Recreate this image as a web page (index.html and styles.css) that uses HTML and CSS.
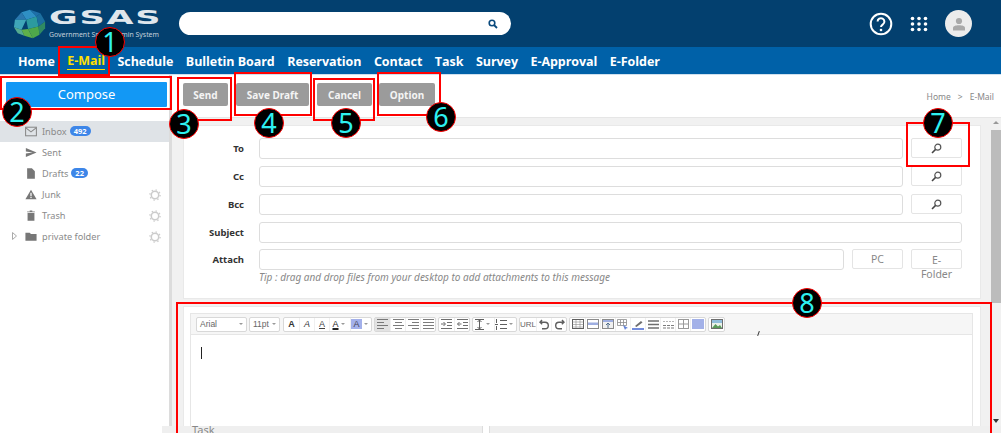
FILE: index.html
```html
<!DOCTYPE html>
<html lang="en">
<head>
  <meta charset="UTF-8">
  <title>GSAS E-Mail</title>
  <link rel="stylesheet" href="styles.css">
</head>
<body>

<div class="page">
  <header class="topbar">
    <div class="logo">
      <svg width="34" height="30" viewBox="0 0 36 36" preserveAspectRatio="none">
        <polygon points="18,1 9,4 14,13 25,9" fill="#2f8fc4"/>
        <polygon points="18,1 29,5 25,9" fill="#1f6fa8"/>
        <polygon points="9,4 2,13 14,13" fill="#2a78b0"/>
        <polygon points="2,13 1,22 9,25 14,13" fill="#3fa6b8"/>
        <polygon points="14,13 25,9 27,21 16,24" fill="#2c9a9f"/>
        <polygon points="25,9 29,5 34,15 27,21" fill="#1c6f9f"/>
        <polygon points="1,22 9,25 12,32 5,29" fill="#55ab8f"/>
        <polygon points="9,25 16,24 21,35 12,32" fill="#5fb04a"/>
        <polygon points="16,24 27,21 28,31 21,35" fill="#4ea84a"/>
        <polygon points="27,21 34,15 34,23 28,31" fill="#2f8a62"/>
      </svg>
      <div class="logo-text">
        <span class="logo-name">GSAS</span>
        <span class="logo-sub">Government Smart Admin System</span>
      </div>
    </div>
    <div class="search">
      <svg width="10" height="10" viewBox="0 0 10 10"><circle cx="4" cy="4" r="2.8" fill="none" stroke="#0a4a7d" stroke-width="1.6"/><line x1="6" y1="6" x2="9" y2="9" stroke="#0a4a7d" stroke-width="1.8"/></svg>
    </div>
    <div class="top-icons">
      <svg width="24" height="24" viewBox="0 0 24 24">
        <circle cx="12" cy="12" r="10.3" fill="none" stroke="#fff" stroke-width="2"/>
        <path d="M8.6 9.6a3.4 3.4 0 1 1 5.3 2.8c-1.2.8-1.9 1.3-1.9 2.7" fill="none" stroke="#fff" stroke-width="2"/>
        <circle cx="12" cy="18" r="1.3" fill="#fff"/>
      </svg>
      <svg class="grid-icon" width="18" height="16" viewBox="0 0 18 16" fill="#fff">
        <circle cx="2.5" cy="2.5" r="1.8"/><circle cx="9" cy="2.5" r="1.8"/><circle cx="15.5" cy="2.5" r="1.8"/>
        <circle cx="2.5" cy="8" r="1.8"/><circle cx="9" cy="8" r="1.8"/><circle cx="15.5" cy="8" r="1.8"/>
        <circle cx="2.5" cy="13.5" r="1.8"/><circle cx="9" cy="13.5" r="1.8"/><circle cx="15.5" cy="13.5" r="1.8"/>
      </svg>
      <div class="avatar">
        <svg width="14" height="14" viewBox="0 0 14 14" fill="#a9a9a9"><circle cx="7" cy="4" r="3.1"/><path d="M1 13.5V11c0-2 2.500-2.800 6-2.800s6 .8 6 2.800v2.500z"/></svg>
      </div>
    </div>
  </header>

  <nav class="mainnav">
    <a>Home</a>
    <a class="active">E-Mail</a>
    <a>Schedule</a>
    <a>Bulletin Board</a>
    <a>Reservation</a>
    <a>Contact</a>
    <a>Task</a>
    <a>Survey</a>
    <a>E-Approval</a>
    <a>E-Folder</a>
  </nav>

  <div class="workspace">
    <aside class="sidebar">
      <button class="compose">Compose</button>
      <ul class="folders">
        <li class="selected">
          <svg class="ficon" viewBox="0 0 14 12"><rect x=".7" y="1" width="12.600" height="10" fill="none" stroke="#888" stroke-width="1.200"/><path d="M1 1.800l6 4.700 6-4.700" fill="none" stroke="#888" stroke-width="1.200"/></svg>
          <span>Inbox</span><span class="count">492</span>
        </li>
        <li>
          <svg class="ficon" viewBox="0 0 14 12"><path d="M1 .8L13.500 6 1 11.200V7.300L9 6 1 4.700z" fill="#777"/></svg>
          <span>Sent</span>
        </li>
        <li>
          <svg class="ficon" viewBox="0 0 14 12"><path d="M2.500 0H8l3.500 3.500V12h-9z" fill="#777"/></svg>
          <span>Drafts</span><span class="count">22</span>
        </li>
        <li>
          <svg class="ficon" viewBox="0 0 14 12"><path d="M7 .5L13.500 11.500H.5z" fill="#777"/><rect x="6.300" y="4" width="1.400" height="4" fill="#fff"/><rect x="6.300" y="8.800" width="1.400" height="1.400" fill="#fff"/></svg>
          <span>Junk</span>
          <svg class="gear" width="12" height="12" viewBox="0 0 12 12"><circle cx="6" cy="6" r="3.700" fill="none" stroke="#ccc" stroke-width="1.500"/><circle cx="6" cy="6" r="5.100" fill="none" stroke="#ccc" stroke-width="1.300" stroke-dasharray="1.400 2.600"/></svg>
        </li>
        <li>
          <svg class="ficon" viewBox="0 0 14 12"><path d="M3 3h8v9H3zM2.500 1.200h3V.2h3v1h3v1h-9z" fill="#777"/></svg>
          <span>Trash</span>
          <svg class="gear" width="12" height="12" viewBox="0 0 12 12"><circle cx="6" cy="6" r="3.700" fill="none" stroke="#ccc" stroke-width="1.500"/><circle cx="6" cy="6" r="5.100" fill="none" stroke="#ccc" stroke-width="1.300" stroke-dasharray="1.400 2.600"/></svg>
        </li>
        <li>
          <svg class="caret" width="5" height="8" viewBox="0 0 5 8"><path d="M.5.500L4.500 4 .5 7.500z" fill="none" stroke="#aaa"/></svg>
          <svg class="ficon" viewBox="0 0 14 12"><path d="M.5 1.500h5l1.500 1.500h6.500v8H.5z" fill="#777"/></svg>
          <span>private folder</span>
          <svg class="gear" width="12" height="12" viewBox="0 0 12 12"><circle cx="6" cy="6" r="3.700" fill="none" stroke="#ccc" stroke-width="1.500"/><circle cx="6" cy="6" r="5.100" fill="none" stroke="#ccc" stroke-width="1.300" stroke-dasharray="1.400 2.600"/></svg>
        </li>
      </ul>
    </aside>

    <main class="content">
      <div class="actions">
        <button class="act act-send">Send</button>
        <button class="act act-save">Save Draft</button>
        <button class="act act-cancel">Cancel</button>
        <button class="act act-option">Option</button>
        <div class="crumbs"><span>Home</span><span class="sep">&gt;</span><span>E-Mail</span></div>
      </div>

      <div class="scrollarea">
        <div class="panels">
          <section class="panel form-panel">
            <div class="row"><label>To</label><div class="field"></div><button class="find"><svg width="11" height="11" viewBox="0 0 11 11"><circle cx="6.800" cy="4.200" r="3" fill="none" stroke="#555" stroke-width="1.200"/><line x1="4.600" y1="6.400" x2="1" y2="10" stroke="#444" stroke-width="1.500"/></svg></button></div>
            <div class="row"><label>Cc</label><div class="field"></div><button class="find"><svg width="11" height="11" viewBox="0 0 11 11"><circle cx="6.800" cy="4.200" r="3" fill="none" stroke="#555" stroke-width="1.200"/><line x1="4.600" y1="6.400" x2="1" y2="10" stroke="#444" stroke-width="1.500"/></svg></button></div>
            <div class="row"><label>Bcc</label><div class="field"></div><button class="find"><svg width="11" height="11" viewBox="0 0 11 11"><circle cx="6.800" cy="4.200" r="3" fill="none" stroke="#555" stroke-width="1.200"/><line x1="4.600" y1="6.400" x2="1" y2="10" stroke="#444" stroke-width="1.500"/></svg></button></div>
            <div class="row row-subject"><label>Subject</label><div class="field"></div></div>
            <div class="row attach-row"><label>Attach</label><div class="field"></div><button class="find btn-pc">PC</button><button class="find btn-folder">E-<br>Folder</button></div>
            <p class="tip">Tip : drag and drop files from your desktop to add attachments to this message</p>
          </section>

          <section class="panel editor-panel">
            <div class="editor">
              <div class="edit-tools">
                <div class="tgroup tsel sel-font"><span>Arial</span><i class="drop"></i></div>
                <div class="tgroup tsel sel-size"><span>11pt</span><i class="drop"></i></div>
                <div class="tgroup">
                  <b class="tb">A</b><b class="tb slant">A</b><u class="tb uline">A</u>
                  <span class="tb tb-wide"><u class="uline blackline">A</u><i class="drop"></i></span>
                  <span class="tb tb-wide"><em class="hilite">A</em><i class="drop"></i></span>
                </div>
                <div class="tgroup">
                  <span class="tb on"><svg width="11" height="10" viewBox="0 0 11 10"><path d="M0 .5h11M0 3.500h7M0 6.500h11M0 9.500h7" stroke="#666"/></svg></span>
                  <span class="tb"><svg width="11" height="10" viewBox="0 0 11 10"><path d="M0 .5h11M2 3.500h7M0 6.500h11M2 9.500h7" stroke="#666"/></svg></span>
                  <span class="tb"><svg width="11" height="10" viewBox="0 0 11 10"><path d="M0 .5h11M4 3.500h7M0 6.500h11M4 9.500h7" stroke="#666"/></svg></span>
                  <span class="tb"><svg width="11" height="10" viewBox="0 0 11 10"><path d="M0 .5h11M0 3.500h11M0 6.500h11M0 9.500h11" stroke="#666"/></svg></span>
                </div>
                <div class="tgroup">
                  <span class="tb"><svg width="11" height="10" viewBox="0 0 11 10"><path d="M0 .5h11M6 3.500h5M6 6.500h5M0 9.500h11M0 5h4M2.500 3l2 2-2 2" stroke="#555" fill="none"/></svg></span>
                  <span class="tb"><svg width="11" height="10" viewBox="0 0 11 10"><path d="M0 .5h11M6 3.500h5M6 6.500h5M0 9.500h11M4.500 5h-4M2.500 3l-2 2 2 2" stroke="#555" fill="none"/></svg></span>
                </div>
                <div class="tgroup">
                  <span class="tb tb-wide"><svg width="9" height="11" viewBox="0 0 9 11"><path d="M0 .5h9M0 10.500h9M4.500 1v9M2.500 3l2-2 2 2M2.500 8l2 2 2-2" stroke="#444" fill="none"/></svg><i class="drop"></i></span>
                  <span class="tb tb-wide"><svg width="12" height="11" viewBox="0 0 12 11"><path d="M5 1.500h7M5 5.500h7M5 9.500h7" stroke="#444"/><path d="M1.500 0v4M1.500 7v4" stroke="#444"/><path d="M0 5.500h3" stroke="#444"/></svg><i class="drop"></i></span>
                </div>
                <div class="tgroup">
                  <span class="tb tb-url">URL</span>
                  <span class="tb"><svg width="11" height="11" viewBox="0 0 11 11"><path d="M3 1L1 3.200l2.200 2M1.500 3.200h4.500a3.300 3.300 0 0 1 0 6.600H3" fill="none" stroke="#444" stroke-width="1.400"/></svg></span>
                  <span class="tb"><svg width="11" height="11" viewBox="0 0 11 11"><path d="M8 1l2 2.200-2.200 2M9.500 3.200H5a3.300 3.300 0 0 0 0 6.600h3" fill="none" stroke="#444" stroke-width="1.400"/></svg></span>
                </div>
                <div class="tgroup">
                  <span class="tb"><svg width="12" height="10" viewBox="0 0 12 10"><rect x=".5" y=".5" width="11" height="9" fill="#fff" stroke="#444"/><path d="M.5 3h11M.5 5.500h11M.5 8h11M4 1v8M8 1v8" stroke="#777" stroke-width=".6"/></svg></span>
                  <span class="tb"><svg width="12" height="10" viewBox="0 0 12 10"><rect x=".5" y=".5" width="11" height="9" fill="#fff" stroke="#777"/><rect x="1" y="3.500" width="10" height="2.500" fill="#8ea0dc"/></svg></span>
                  <span class="tb"><svg width="12" height="10" viewBox="0 0 12 10"><rect x=".5" y=".5" width="11" height="9" fill="#eee" stroke="#777"/><rect x="1" y="1" width="10" height="2" fill="#8ea0dc"/><path d="M6 9V4M4 6l2-2 2 2" stroke="#357" fill="none"/></svg></span>
                  <span class="tb"><svg width="12" height="11" viewBox="0 0 12 11"><path d="M.5 .5h9v6h-9zM.5 3.500h9M3.500 1v5M6.500 1v5" fill="none" stroke="#777" stroke-width=".8"/><path d="M6 6l5 3-2 .5-1 1.500z" fill="#4a6fd0"/></svg></span>
                  <span class="tb"><svg width="12" height="11" viewBox="0 0 12 11"><path d="M3 7l6-5 1.500 1.500-6 4.500z" fill="#555"/><rect x="0" y="9" width="12" height="2" fill="#5b78d8"/></svg></span>
                  <span class="tb"><svg width="11" height="9" viewBox="0 0 11 9"><path d="M0 1h11M0 4.500h11M0 8h11" stroke="#555" stroke-width="1.300"/></svg></span>
                  <span class="tb"><svg width="11" height="9" viewBox="0 0 11 9"><path d="M0 1.500h11" stroke="#aaa" stroke-dasharray="2 1"/><path d="M0 5.500h11M0 8h11" stroke="#666" stroke-dasharray="3 1"/></svg></span>
                  <span class="tb"><svg width="11" height="10" viewBox="0 0 11 10"><rect x=".5" y=".5" width="10" height="9" fill="none" stroke="#888"/><path d="M5.500 1v8M1 5h9" stroke="#888"/></svg></span>
                  <span class="tb"><svg width="12" height="10" viewBox="0 0 12 10"><rect width="12" height="10" fill="#94a4e4"/></svg></span>
                </div>
                <div class="tgroup">
                  <span class="tb"><svg width="12" height="10" viewBox="0 0 12 10"><rect x=".5" y=".5" width="11" height="9" fill="#e8f0e8" stroke="#555"/><path d="M1 9l3.500-4 2.500 2.500L9 6l2 3z" fill="#3d8a3d"/><rect x="1" y="1" width="10" height="3" fill="#7fb5d8"/></svg></span>
                </div>
              </div>
              <div class="edit-body"><span class="cursor"></span></div>
            </div>
          </section>
        </div>
        <div class="vscroll">
          <i class="arrow up"></i>
          <div class="thumb"></div>
          <i class="arrow down"></i>
        </div>
      </div>
      <div class="under"><span class="under-left">Task</span><span class="under-gap"></span></div>
    </main>
  </div>

  <!-- guide marks drawn on top of the screenshot -->
  <div class="mark box-1"></div>
  <div class="mark box-2"></div>
  <div class="mark box-3"></div>
  <div class="mark box-4"></div>
  <div class="mark box-5"></div>
  <div class="mark box-6"></div>
  <div class="mark box-7"></div>
  <div class="mark box-8"></div>
  <div class="tick"></div>
  <div class="num num-1">1</div>
  <div class="num num-2">2</div>
  <div class="num num-3">3</div>
  <div class="num num-4">4</div>
  <div class="num num-5">5</div>
  <div class="num num-6">6</div>
  <div class="num num-7">7</div>
  <div class="num num-8">8</div>
</div>

</body>
</html>
```
FILE: styles.css
```css
html, body {
  margin: 0;
  padding: 0;
  background: #fff;
}

.page {
  position: relative;
  width: 1001px;
  height: 433px;
  overflow: hidden;
  font-family: "Noto Sans", "Open Sans", sans-serif;
  display: flex;
  flex-direction: column;
}

button {
  font-family: inherit;
  cursor: pointer;
}

/* top bar */
.topbar {
  height: 47px;
  background: #03406f;
  display: flex;
  align-items: center;
  flex: none;
}

.logo {
  display: flex;
  align-items: center;
  width: 179px;
  padding-left: 13px;
  box-sizing: border-box;
  gap: 2px;
}

.logo-text {
  display: flex;
  flex-direction: column;
  color: #dfe6ec;
}

.logo-name {
  font-family: "DejaVu Sans", sans-serif;
  font-size: 20px;
  font-weight: bold;
  line-height: 18px;
  letter-spacing: 1px;
  transform: scaleX(1.75);
  transform-origin: left;
}

.logo-sub {
  margin-top: 4px;
  font-size: 6.900px;
  line-height: 9px;
  color: #c3d0db;
  white-space: nowrap;
}

.search {
  width: 332px;
  height: 23px;
  border-radius: 12px;
  background: #fff;
  display: flex;
  align-items: center;
  justify-content: flex-end;
  padding-right: 13px;
  box-sizing: border-box;
}

.top-icons {
  margin-left: auto;
  display: flex;
  align-items: center;
  padding-right: 29px;
}

.grid-icon {
  margin-left: 17px;
}

.avatar {
  margin-left: 17px;
  width: 27px;
  height: 27px;
  border-radius: 50%;
  background: #ececec;
  display: flex;
  align-items: center;
  justify-content: center;
}

/* nav */
.mainnav {
  height: 28px;
  background: #0061a8;
  display: flex;
  align-items: center;
  flex: none;
  padding: 1px 0 0 18px;
  gap: 12.500px;
  border-bottom: 1px solid #cfe0ee;
  box-sizing: border-box;
}

.mainnav a {
  color: #fff;
  font-size: 12.500px;
  font-weight: bold;
  font-family: "Open Sans", sans-serif;
  white-space: nowrap;
  letter-spacing: -.05px;
}

.mainnav a.active {
  color: #ffe000;
  border-bottom: 1px solid #ffe000;
}

/* layout */
.workspace {
  flex: 1;
  display: flex;
  min-height: 0;
}

.sidebar {
  width: 169px;
  flex: none;
  padding-top: 7px;
  box-sizing: border-box;
}

.compose {
  display: block;
  margin-left: 6px;
  width: 161px;
  height: 25px;
  border: none;
  border-radius: 1px;
  background: #1298f5;
  color: #fff;
  font-size: 13px;
  padding: 0 0 2px;
}

.folders {
  list-style: none;
  margin: 14px 0 0;
  padding: 0;
}

.folders li {
  position: relative;
  height: 21px;
  display: flex;
  align-items: center;
  padding: 0 0 1px 25px;
  box-sizing: border-box;
  font-size: 9.200px;
  color: #8a8a8a;
  white-space: nowrap;
}

.folders li.selected {
  background: #dfe3e7;
}

.ficon {
  width: 12px;
  height: 11px;
  margin-right: 5px;
  flex: none;
}

.count {
  margin-left: 3px;
  padding: 0 4px;
  height: 10px;
  line-height: 10px;
  border-radius: 5px;
  background: #3d86e8;
  color: #fff;
  font-size: 7.500px;
  font-weight: bold;
}

.gear {
  position: absolute;
  left: 149px;
  top: 5px;
}

.caret {
  position: absolute;
  left: 12px;
  top: 6px;
}

.content {
  flex: 1;
  min-width: 0;
  display: flex;
  flex-direction: column;
  border-left: 3px solid #dcdcdc;
}

.actions {
  height: 42px;
  flex: none;
  display: flex;
  align-items: flex-start;
  padding: 8px 0 0 11px;
  box-sizing: border-box;
}

.act {
  height: 23px;
  border: none;
  border-radius: 2px;
  background: #9b9b9b;
  color: #f4f4f4;
  font-size: 10px;
  font-weight: bold;
  padding: 0;
  margin-right: 8px;
}

.act-send { width: 45px; }
.act-save { width: 73px; }
.act-cancel { width: 55px; margin-right: 7px; }
.act-option { width: 56px; }

.crumbs {
  margin-left: auto;
  padding: 8px 7px 0 0;
  font-size: 8.500px;
  color: #888;
  display: flex;
  gap: 7px;
}

.scrollarea {
  flex: 1;
  min-height: 0;
  display: flex;
  background: #f1f1f1;
  border-top: 1px solid #e6e6e6;
}

.panels {
  flex: 1;
  min-width: 0;
  padding: 7px 0 0 11px;
  overflow: hidden;
}

.panel {
  width: 798px;
  background: #fff;
  border: 1px solid #e9e9e9;
  box-sizing: border-box;
}

.form-panel {
  height: 174px;
  padding-top: 12px;
}

.row {
  height: 28px;
  display: flex;
  align-items: flex-start;
}

.row-subject {
  height: 27px;
}

.row label {
  width: 60px;
  text-align: right;
  flex: none;
  font-size: 9.500px;
  font-weight: bold;
  color: #333;
  line-height: 21px;
}

.field {
  margin-left: 15px;
  flex: 1;
  height: 21px;
  border: 1px solid #ddd;
  border-radius: 3px;
  box-sizing: border-box;
}

.find {
  width: 51px;
  height: 20px;
  margin: 0 18px 0 8px;
  padding: 0;
  background: #fff;
  border: 1px solid #e4e4e4;
  border-radius: 2px;
  display: flex;
  align-items: center;
  justify-content: center;
  font-size: 10.500px;
  color: #888;
}

.row-subject .field {
  margin-right: 18px;
}

.btn-pc {
  margin-right: 8px;
}

.btn-folder {
  margin: 0 18px 0 0;
  line-height: 14px;
  padding-top: 3px;
  text-align: center;
  display: block;
  flex: none;
}

.tip {
  margin: -7px 0 0 75px;
  font-size: 10px;
  font-style: italic;
  color: #888;
}

.editor-panel {
  height: 200px;
  margin-top: 7px;
  padding: 6px 7px 0 6px;
}

.editor {
  border: 1px solid #e6e6e6;
  height: 200px;
}

.edit-tools {
  height: 20px;
  background: #f6f6f6;
  border-bottom: 1px solid #e6e6e6;
  display: flex;
  align-items: center;
  padding-left: 5px;
  gap: 2px;
}

.tgroup {
  display: flex;
  height: 15px;
  border: 1px solid #d8d8d8;
  border-radius: 2px;
  background: #fff;
  box-sizing: border-box;
}

.tsel {
  align-items: center;
  font-family: "Liberation Sans", sans-serif;
  font-size: 8.500px;
  color: #666;
  padding-left: 3px;
}

.sel-font { width: 51px; }
.sel-size { width: 31px; margin-right: 1px; }

.tsel span { flex: 1; }

.drop {
  display: inline-block;
  width: 0;
  height: 0;
  border-left: 2px solid transparent;
  border-right: 2px solid transparent;
  border-top: 2px solid #999;
  margin: 0 3px 0 2px;
  flex: none;
}

.tb {
  min-width: 15px;
  height: 13px;
  box-sizing: border-box;
  display: flex;
  align-items: center;
  justify-content: center;
  font-family: "Liberation Sans", sans-serif;
  font-size: 9px;
  color: #333;
  font-style: normal;
  text-decoration: none;
}

.tb svg {
  opacity: .85;
}

.tb + .tb {
  border-left: 1px solid #f0f0f0;
}

.tb-wide {
  min-width: 21px;
}

.slant {
  font-style: italic;
  font-weight: normal;
}

.uline {
  font-weight: normal;
  text-decoration: underline;
  font-size: 9px;
  color: #444;
}

.blackline {
  text-decoration-thickness: 2px;
  color: #222;
}

.hilite {
  background: #a3b0ea;
  color: #445;
  font-style: normal;
  padding: 0 2px;
}

.tb.on {
  background: #e2e2e2;
}

.tb-url {
  font-size: 8px;
  min-width: 16px;
  color: #666;
}

.edit-body {
  padding: 12px 10px;
}

.cursor {
  display: block;
  width: 1px;
  height: 12px;
  background: #222;
}

.vscroll {
  width: 11px;
  margin-left: auto;
  flex: none;
  display: flex;
  flex-direction: column;
  align-items: center;
}

.thumb {
  width: 10px;
  height: 173px;
  background: #bcbcbc;
  margin-top: 6px;
}

.arrow {
  display: block;
  width: 0;
  height: 0;
  border-left: 3px solid transparent;
  border-right: 3px solid transparent;
}

.arrow.up {
  border-bottom: 3px solid #999;
  margin-top: 3px;
}

.arrow.down {
  border-top: 4px solid #333;
  margin-top: auto;
  margin-bottom: 10px;
}

/* strip of the page behind, showing under the scrolled dialog */
.under {
  position: absolute;
  left: 162px;
  right: 0;
  bottom: 0;
  height: 7px;
  display: flex;
  background: #efefef;
  font-size: 11px;
  color: #888;
  line-height: 7px;
  padding-left: 30px;
  overflow: hidden;
}

.under-left {
  width: 290px;
}

.under-gap {
  width: 8px;
  background: #fff;
  border: solid #ddd;
  border-width: 0 1px;
  box-sizing: border-box;
}

/* guide marks */
.mark {
  position: absolute;
  border: 2px solid #f00;
  box-sizing: border-box;
}

.box-1 { left: 58px; top: 46px; width: 52px; height: 30px; }
.box-2 { left: 0; top: 76px; width: 172px; height: 34px; }
.box-3 { left: 177px; top: 77px; width: 55px; height: 44px; }
.box-4 { left: 234px; top: 72px; width: 78px; height: 44px; }
.box-5 { left: 313px; top: 78px; width: 62px; height: 43px; }
.box-6 { left: 377px; top: 72px; width: 64px; height: 44px; }
.box-7 { left: 906px; top: 122px; width: 64px; height: 45px; }
.box-8 { left: 176px; top: 302px; width: 816px; height: 140px; }

.tick {
  position: absolute;
  left: 758px;
  top: 331px;
  width: 1px;
  height: 5px;
  background: #333;
  transform: rotate(20deg);
}

.num {
  position: absolute;
  width: 30px;
  height: 30px;
  border-radius: 50%;
  background: #000;
  border: 1px solid #f00;
  box-sizing: border-box;
  color: #2ef0f0;
  font-size: 27px;
  line-height: 28px;
  text-align: center;
}

.num-1 { left: 95px; top: 27px; }
.num-2 { left: 2px; top: 97px; }
.num-3 { left: 169px; top: 109px; }
.num-4 { left: 254px; top: 108px; }
.num-5 { left: 331px; top: 108px; }
.num-6 { left: 426px; top: 102px; }
.num-7 { left: 923px; top: 108px; }
.num-8 { left: 792px; top: 288px; }
```
